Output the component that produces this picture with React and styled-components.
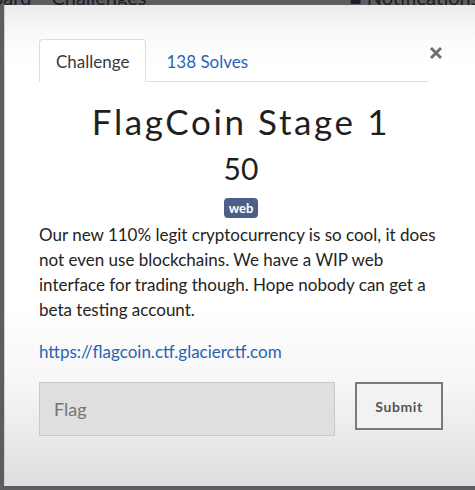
import styled, { createGlobalStyle } from "styled-components";

const GlobalStyle = createGlobalStyle`
  html, body {
    margin: 0;
    padding: 0;
    background: #5c5c61;
    overflow: hidden;
  }
  body {
    font-family: Lato, "Liberation Sans", sans-serif;
  }
`;

const Page = styled.div({
  width: "475px",
  height: "490px",
  display: "flex",
  flexDirection: "column",
  overflow: "hidden",
});

const NavStrip = styled.div({
  height: "5px",
  overflow: "hidden",
  display: "flex",
  alignItems: "flex-end",
  fontFamily: "Lato, sans-serif",
  fontSize: "20px",
  color: "#1e1e22",
  whiteSpace: "nowrap",
});

const NavItem = styled.span({
  lineHeight: "20px",
  marginBottom: "-2px",
  marginLeft: (p) => p.$gap,
});

const Backdrop = styled.div({
  display: "flex",
  flex: 1,
  paddingLeft: "4px",
  paddingBottom: "4px",
});

const Modal = styled.div({
  flex: 1,
  marginRight: "-20px",
  background:
    "linear-gradient(180deg, #ebebeb 0px, #fafafa 30px, #ffffff 60px, #ffffff 300px, #f6f6f6 380px, #dedede 481px)",
  borderLeft: "1px solid #d0d0d0",
  padding: "34px 0 0 34px",
  boxSizing: "border-box",
});

const Content = styled.div({
  width: "404px",
});

const Header = styled.div({
  display: "flex",
  alignItems: "flex-start",
});

const TabList = styled.div({
  width: "389px",
  display: "flex",
  borderBottom: "1px solid #dcdcdc",
});

const Tab = styled.div({
  height: "43px",
  boxSizing: "border-box",
  padding: "2px 16px 0",
  marginBottom: "-1px",
  marginRight: "3px",
  display: "flex",
  alignItems: "center",
  fontSize: "17px",
  color: (p) => (p.$active ? "#3a3a3a" : "#2962b4"),
  background: (p) => (p.$active ? "#fff" : "transparent"),
  border: (p) => (p.$active ? "1px solid #dcdcdc" : "1px solid transparent"),
  borderBottomColor: (p) => (p.$active ? "#fff" : "transparent"),
  borderRadius: "4px 4px 0 0",
});

const Close = styled.div({
  marginLeft: "1px",
  marginTop: "7px",
  width: "14px",
  height: "14px",
  display: "flex",
  alignItems: "center",
  justifyContent: "center",
});

const Title = styled.h2({
  margin: "17px 0 0",
  textAlign: "center",
  fontFamily: "Lato, sans-serif",
  fontWeight: 400,
  fontSize: "35px",
  letterSpacing: "2.6px",
  lineHeight: "44px",
  color: "#1f1f1f",
});

const Value = styled.h4({
  margin: "5px 0 0",
  textAlign: "center",
  fontWeight: 400,
  fontSize: "30px",
  lineHeight: "40px",
  color: "#1f1f1f",
});

const TagRow = styled.div({
  display: "flex",
  justifyContent: "center",
  marginTop: "10px",
});

const Tag = styled.span({
  background: "#4c5f86",
  color: "#fff",
  fontWeight: 700,
  fontSize: "13px",
  lineHeight: "20px",
  padding: "0 5px",
  borderRadius: "4px",
});

const Description = styled.p({
  margin: "4px 0 0",
  fontSize: "17px",
  lineHeight: "25px",
  color: "#232323",
  width: "400px",
});

const Link = styled.a({
  display: "block",
  marginTop: "17px",
  fontSize: "17px",
  lineHeight: "25px",
  color: "#2a62b3",
  textDecoration: "none",
});

const Form = styled.div({
  display: "flex",
  alignItems: "flex-start",
  marginTop: "18px",
  gap: "20px",
});

const FlagInput = styled.input({
  width: "296px",
  height: "54px",
  boxSizing: "border-box",
  border: "1px solid #c9c9cb",
  background: "#dfdfe0",
  padding: "0 14px",
  fontFamily: "Lato, sans-serif",
  fontSize: "18px",
  outline: "none",
  "::placeholder": {
    color: "#666",
  },
});

const SubmitButton = styled.button({
  width: "88px",
  height: "48px",
  boxSizing: "border-box",
  border: "2px solid #7a7a7a",
  background: "#f2f2f2",
  color: "#555",
  fontFamily: "Lato, sans-serif",
  fontWeight: 700,
  fontSize: "14px",
  letterSpacing: "0.6px",
});

const CloseIcon = () => (
  <svg width="14" height="14" viewBox="0 0 14 14">
    <path d="M2 2 L12 12 M12 2 L2 12" stroke="#6f6f6f" strokeWidth="3" />
  </svg>
);

export default function App() {
  return (
    <Page>
      <GlobalStyle />
      <NavStrip>
        <NavItem $gap="-8px">oard</NavItem>
        <NavItem $gap="20px">Challenges</NavItem>
        <NavItem $gap="203px">■ Notifications</NavItem>
      </NavStrip>
      <Backdrop>
        <Modal>
          <Content>
            <Header>
              <TabList>
                <Tab $active>Challenge</Tab>
                <Tab>138 Solves</Tab>
              </TabList>
              <Close>
                <CloseIcon />
              </Close>
            </Header>
            <Title>FlagCoin Stage 1</Title>
            <Value>50</Value>
            <TagRow>
              <Tag>web</Tag>
            </TagRow>
            <Description>
              Our new 110% legit cryptocurrency is so cool, it does not even use
              blockchains. We have a WIP web interface for trading though. Hope
              nobody can get a beta testing account.
            </Description>
            <Link href="#">https://flagcoin.ctf.glacierctf.com</Link>
            <Form>
              <FlagInput placeholder="Flag" />
              <SubmitButton>Submit</SubmitButton>
            </Form>
          </Content>
        </Modal>
      </Backdrop>
    </Page>
  );
}
